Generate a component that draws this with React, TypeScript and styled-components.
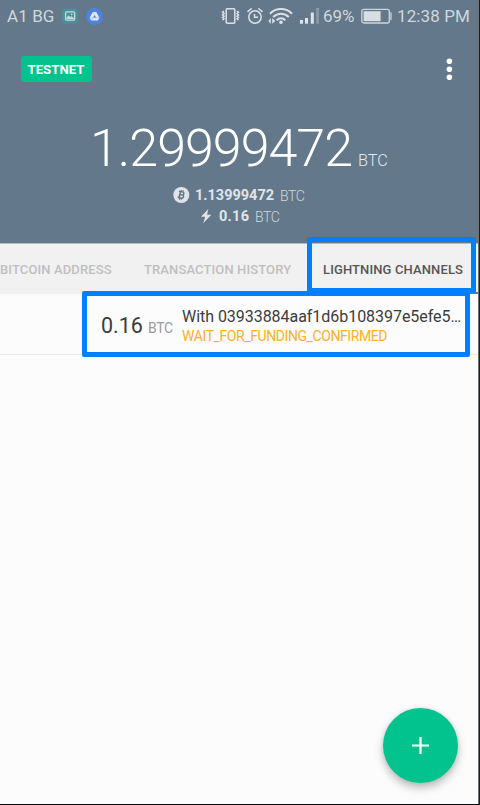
import React from "react";
import styled, { createGlobalStyle } from "styled-components";

const Global = createGlobalStyle`
  * { box-sizing: border-box; }
  html, body { margin: 0; padding: 0; }
  body { font-family: Roboto, "Liberation Sans", sans-serif; overflow: hidden; }
  svg { display: block; flex: none; }
`;

const Device = styled.div`
  width: 480px;
  height: 805px;
  border-right: 1px solid #1d2023;
  border-bottom: 1px solid #08090a;
`;

const Screen = styled.div`
  position: relative;
  display: flex;
  flex-direction: column;
  height: 804px;
  background: #fcfcfc;
  border-right: 1px solid #6b7074;
`;

const Header = styled.header`
  height: 243px;
  flex: none;
  background: #63788a;
  color: #fff;
`;

const StatusBar = styled.div`
  display: flex;
  align-items: center;
  height: 32px;
  padding-left: 7px;
  color: #d0d7dd;
`;

const StatusText = styled.span<{ $w: number; $ls?: number }>`
  flex: none;
  width: ${(p) => p.$w}px;
  font-size: 17px;
  line-height: 32px;
  letter-spacing: ${(p) => p.$ls ?? 0}px;
  white-space: nowrap;
`;

const Gap = styled.span<{ $w: number }>`
  flex: none;
  width: ${(p) => p.$w}px;
`;

const Toolbar = styled.div`
  display: flex;
  align-items: flex-start;
  justify-content: space-between;
  height: 59px;
  padding: 24px 24px 0 21px;
`;

const Badge = styled.span`
  width: 71px;
  height: 26px;
  padding-left: 6.5px;
  border-radius: 3px;
  background: #02c38e;
  font-size: 13.2px;
  font-weight: 700;
  line-height: 27px;
`;

const MenuButton = styled.button`
  padding: 0;
  border: 0;
  background: none;
`;

const Balance = styled.div`
  display: flex;
  align-items: baseline;
  height: 94px;
  padding-left: 90px;
  white-space: nowrap;
`;

const BalanceAmount = styled.span`
  width: 268px;
  font-size: 52px;
  font-weight: 300;
  line-height: 116px;
  letter-spacing: -1px;
`;

const BalanceUnit = styled.span`
  font-size: 16.3px;
  font-weight: 300;
  color: #e3e8ec;
`;

const SubBalance = styled.div<{ $left: number }>`
  display: flex;
  align-items: center;
  height: 21px;
  padding-left: ${(p) => p.$left}px;
  font-size: 14.5px;
  color: #e0e4e8;
  white-space: nowrap;
`;

const SubAmount = styled.span<{ $w: number; $ls?: number }>`
  width: ${(p) => p.$w}px;
  font-weight: 700;
  letter-spacing: ${(p) => p.$ls ?? 0}px;
`;

const SubUnit = styled.span`
  font-size: 14px;
  font-weight: 300;
  letter-spacing: -0.4px;
  color: #d0d7dd;
`;

const Tabs = styled.nav`
  display: flex;
  align-items: stretch;
  flex: none;
  height: 51px;
  border-top: 1px solid #b4bdc5;
  background: #f1f1f1;
`;

const Tab = styled.span<{ $w: number; $pad: number; $active?: boolean }>`
  flex: none;
  width: ${(p) => p.$w}px;
  padding-left: ${(p) => p.$pad}px;
  border-bottom: 2px solid ${(p) => (p.$active ? "#63788a" : "transparent")};
  font-size: 13px;
  font-weight: 500;
  line-height: 51px;
  letter-spacing: 0.12px;
  white-space: nowrap;
  color: ${(p) => (p.$active ? "#555" : "#bfbfbf")};
`;

const ChannelRow = styled.div`
  display: flex;
  flex: none;
  height: 61px;
  padding: 12px 0 0 101px;
  border-bottom: 1px solid #ececec;
  white-space: nowrap;
`;

const ChannelAmount = styled.div`
  width: 81px;
  font-size: 21.5px;
  line-height: 39px;
  color: #3c3c3c;
`;

const ChannelUnit = styled.span`
  margin-left: 5px;
  font-size: 14px;
  letter-spacing: -0.3px;
  color: #9b9b9b;
`;

const ChannelInfo = styled.div`
  display: flex;
  flex-direction: column;
`;

const ChannelPeer = styled.span`
  font-size: 16px;
  line-height: 21px;
  letter-spacing: -0.04px;
  color: #3c3c3c;
`;

const ChannelState = styled.span`
  font-size: 14px;
  line-height: 19px;
  letter-spacing: -0.41px;
  color: #ffb01f;
`;

const Highlight = styled.div<{ $x: number; $y: number; $w: number; $h: number }>`
  position: absolute;
  left: ${(p) => p.$x}px;
  top: ${(p) => p.$y}px;
  width: ${(p) => p.$w}px;
  height: ${(p) => p.$h}px;
  border: 5px solid #0080ff;
  border-radius: 2px;
`;

const AddButton = styled.button`
  position: absolute;
  left: 382.7px;
  top: 708px;
  display: flex;
  align-items: center;
  justify-content: center;
  width: 75px;
  height: 75px;
  padding: 0;
  border: 0;
  border-radius: 50%;
  background: #02c38e;
  box-shadow: 0 5px 9px rgba(0, 0, 0, 0.25), 0 0 4px rgba(0, 0, 0, 0.1);
`;

const PictureIcon = () => (
  <svg width="16" height="16" viewBox="0 0 16 16">
    <rect x="0.5" y="0.5" width="15" height="15" rx="2.5" fill="#4b919b" />
    <rect x="3.6" y="3.8" width="9" height="8.4" rx="1" fill="none" stroke="#c4dadd" strokeWidth="1.3" />
    <path d="M4.5 11V9.5l2-2 2 1.6 1-1L12 10.4V11z" fill="#c4dadd" />
    <circle cx="9.7" cy="6.3" r="0.9" fill="#c4dadd" />
  </svg>
);

const DriveIcon = () => (
  <svg width="17" height="17" viewBox="0 0 17 17">
    <circle cx="8.5" cy="8.5" r="8.4" fill="#4b83df" />
    <path d="M6.8 4h3.4l3.2 5.7-1.6 2.9H5.2L3.6 9.7z" fill="#e2eaf7" />
    <path d="M8.5 7.1 10 9.8H7z" fill="#4b83df" />
    <path d="m6.8 4 3.3 5.7M3.6 9.7h9.8M5.2 12.6 8.5 7" stroke="#86a9e4" strokeWidth=".4" />
  </svg>
);

const VibrateIcon = () => (
  <svg width="19" height="18" viewBox="0 0 19 18" fill="none" stroke="#dce1e5">
    <rect x="5.2" y="1.7" width="8.6" height="14.6" rx="1" strokeWidth="1.5" />
    <path d="M3 4 1.5 5.3 3 6.6 1.5 7.9 3 9.2l-1.5 1.3L3 11.8l-1.5 1.3M16 4l1.5 1.3L16 6.6l1.5 1.3L16 9.2l1.5 1.3-1.5 1.3 1.5 1.3" strokeWidth="1.5" />
  </svg>
);

const AlarmIcon = () => (
  <svg width="16" height="18" viewBox="0 0 16 18" fill="none" stroke="#dce1e5" strokeWidth="1.5">
    <circle cx="8" cy="10" r="6.2" />
    <path d="M1 4.4 4.2 1.7M11.8 1.7 15 4.4" strokeLinecap="round" />
    <path d="M7.5 7v3.2H11" />
  </svg>
);

const WifiIcon = () => (
  <svg width="25" height="18" viewBox="0 0 25 18" fill="none" stroke="#dce1e5" strokeWidth="2">
    <path d="M2 6.7C8 .5 18 .5 24 6.7M5.2 10c4.3-4.4 11.3-4.4 15.6 0M8.7 13.3c2.3-2.6 6.3-2.6 8.6 0" />
    <circle cx="13" cy="15.3" r="1.8" fill="#dce1e5" stroke="none" />
    <path d="M.3 13.9 2.8 11v5.8zM7.3 13.9 4.2 11v5.8z" fill="#dce1e5" stroke="none" />
  </svg>
);

const SignalIcon = () => (
  <svg width="20" height="18" viewBox="0 0 20 18" fill="#e0e4e8">
    <rect x="0" y="13" width="3" height="3.7" />
    <rect x="5" y="11" width="3" height="5.7" />
    <rect x="10.8" y="5.5" width="3" height="11.2" />
    <rect x="16.3" y="1" width="2.6" height="15.7" fill="#8b9ba8" />
  </svg>
);

const BatteryIcon = () => (
  <svg width="31" height="16" viewBox="0 0 31 16">
    <rect x="0.8" y="1.4" width="27.5" height="13.6" rx="2" fill="none" stroke="#ced5da" strokeWidth="1.3" />
    <path d="M29.3 4c1.3 0 1.3 1 1.3 1.8v4.6c0 .8 0 1.8-1.3 1.8z" fill="#ced5da" />
    <rect x="2.6" y="3.2" width="17" height="10" fill="#d9dee2" />
  </svg>
);

const MoreIcon = () => (
  <svg width="10" height="24" viewBox="0 0 10 24" fill="#fff">
    <circle cx="5.4" cy="5.3" r="2.8" />
    <circle cx="5.4" cy="13.3" r="2.8" />
    <circle cx="5.4" cy="21.2" r="2.8" />
  </svg>
);

const BitcoinIcon = () => (
  <svg width="17" height="17" viewBox="0 0 17 17">
    <circle cx="8.3" cy="8" r="8" fill="#e0e4e8" />
    <g transform="translate(-.2 -.5) rotate(13 8.5 8.5)" fill="none" stroke="#63788a">
      <path d="M6.9 5.3h2.3a1.5 1.5 0 0 1 0 3H7.1h2.4a1.6 1.6 0 0 1 0 3.2H6.9zM5.4 5.3h2M5.4 11.5h2" strokeWidth="1.5" />
      <path d="M7.6 3.4v1.7M9.4 3.4v1.7M7.6 11.8v1.8M9.4 11.8v1.8" strokeWidth="1" />
    </g>
  </svg>
);

const BoltIcon = () => (
  <svg width="12" height="15" viewBox="0 0 12 15">
    <path d="M8.3 0 1 7.7h4.2L3.2 14.2 11.3 5.7H7z" fill="#e0e4e8" />
  </svg>
);

const PlusIcon = () => (
  <svg width="17" height="17" viewBox="0 0 17 17">
    <path d="M8.5 0v17M0 8.5h17" stroke="#fff" strokeWidth="2.2" />
  </svg>
);

export default function App() {
  return (
    <Device>
      <Global />
      <Screen>
        <Header>
          <StatusBar>
            <StatusText $w={55} $ls={0.1}>A1 BG</StatusText>
            <PictureIcon />
            <Gap $w={8} />
            <DriveIcon />
            <Gap $w={118} />
            <VibrateIcon />
            <Gap $w={7} />
            <AlarmIcon />
            <Gap $w={5} />
            <WifiIcon />
            <Gap $w={7} />
            <SignalIcon />
            <Gap $w={3} />
            <StatusText $w={38}>69%</StatusText>
            <BatteryIcon />
            <Gap $w={5} />
            <StatusText $w={75} $ls={0.1}>12:38 PM</StatusText>
          </StatusBar>
          <Toolbar>
            <Badge>TESTNET</Badge>
            <MenuButton aria-label="More options"><MoreIcon /></MenuButton>
          </Toolbar>
          <Balance>
            <BalanceAmount>1.29999472</BalanceAmount>
            <BalanceUnit>BTC</BalanceUnit>
          </Balance>
          <SubBalance $left={173}>
            <BitcoinIcon />
            <Gap $w={5} />
            <SubAmount $w={85}>1.13999472</SubAmount>
            <SubUnit>BTC</SubUnit>
          </SubBalance>
          <SubBalance $left={200}>
            <BoltIcon />
            <Gap $w={7} />
            <SubAmount $w={36} $ls={0.3}>0.16</SubAmount>
            <SubUnit>BTC</SubUnit>
          </SubBalance>
        </Header>
        <Tabs>
          <Tab $w={128} $pad={0}>BITCOIN ADDRESS</Tab>
          <Tab $w={179} $pad={16}>TRANSACTION HISTORY</Tab>
          <Tab $w={171} $pad={16} $active>LIGHTNING CHANNELS</Tab>
        </Tabs>
        <ChannelRow>
          <ChannelAmount>0.16<ChannelUnit>BTC</ChannelUnit></ChannelAmount>
          <ChannelInfo>
            <ChannelPeer>With 03933884aaf1d6b108397e5efe5…</ChannelPeer>
            <ChannelState>WAIT_FOR_FUNDING_CONFIRMED</ChannelState>
          </ChannelInfo>
        </ChannelRow>
        <Highlight $x={307} $y={237} $w={169} $h={56} />
        <Highlight $x={82} $y={291} $w={388} $h={66} />
        <AddButton aria-label="Add channel"><PlusIcon /></AddButton>
      </Screen>
    </Device>
  );
}
